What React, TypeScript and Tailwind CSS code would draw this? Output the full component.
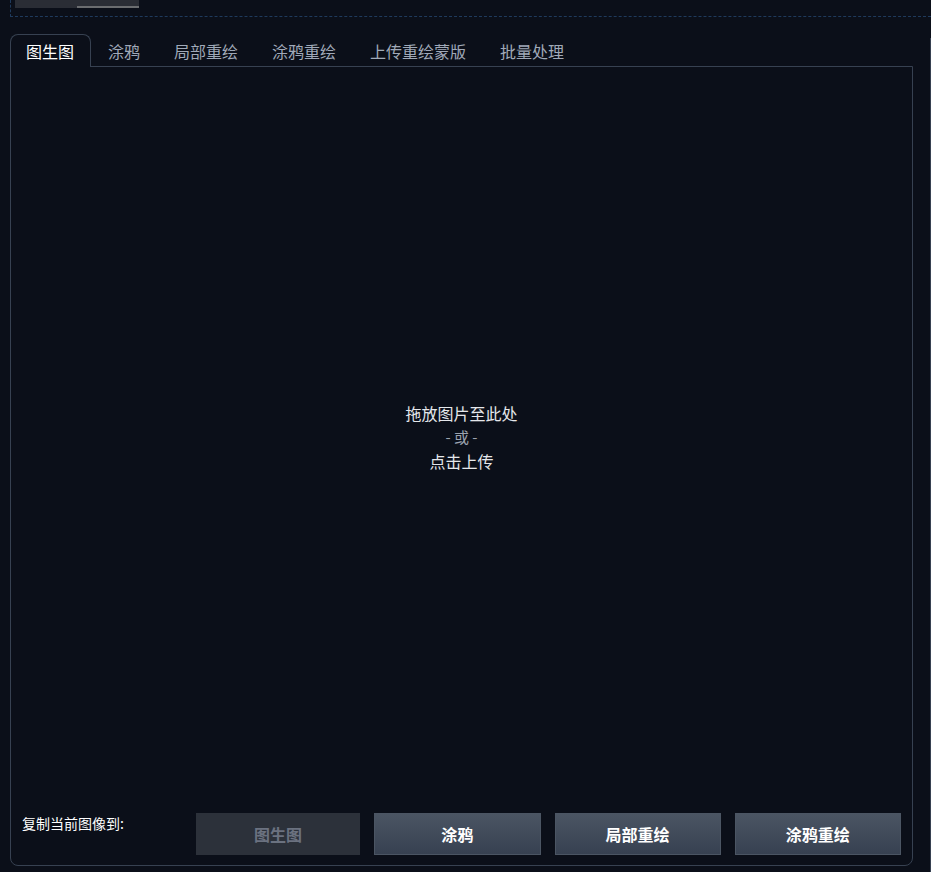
import React from "react";

const tabs = ["图生图", "涂鸦", "局部重绘", "涂鸦重绘", "上传重绘蒙版", "批量处理"];

export default function App() {
  return (
    <div
      className="w-[931px] h-[872px] overflow-hidden bg-[#0b0f19] text-white"
      style={{ fontFamily: '"Noto Sans CJK SC", "Noto Sans", sans-serif' }}
    >
      {/* top dashed block */}
      <div className="ml-[10px] h-[17px] border-l border-b border-dashed border-[#1f3a5c]">
        <div className="ml-[4px] w-[124px] h-[8px] bg-[#2a2d35] flex items-end">
          <div className="ml-[62px] w-[62px] h-[2px] bg-[#6b6d70]" />
        </div>
      </div>

      <div className="flex mt-[17px]">
        <div className="ml-[10px] w-[903px] flex flex-col">
          {/* tabs */}
          <div className="flex relative z-10 -mb-px">
            {tabs.map((t, i) => (
              <div
                key={t}
                className={
                  i === 0
                    ? "pl-[15px] pr-4 py-1 border border-b-0 border-[#374151] rounded-t-lg bg-[#0b0f19] text-white text-[16px] leading-[24px] h-[33px]"
                    : "px-4 py-1 border border-b-0 border-transparent text-[#a0a9b8] text-[16px] leading-[24px] h-[33px]"
                }
              >
                {t}
              </div>
            ))}
          </div>
          {/* panel */}
          <div className="h-[800px] border border-[#374151] rounded-b-lg flex flex-col">
            <div className="h-[740px] flex flex-col items-center justify-center text-[16px] leading-[24px]">
              <div className="text-[#e5e7eb]">拖放图片至此处</div>
              <div className="text-[#9ca3af] text-[15px]">- 或 -</div>
              <div className="text-[#e5e7eb]">点击上传</div>
            </div>
            <div className="mt-[6px] flex pl-[11px] pr-[11px]">
              <div className="w-[174px] text-[14px] leading-[20px] text-white">复制当前图像到:</div>
              <div className="flex-1 flex gap-[14px]">
                <div className="flex-1 h-[42px] bg-[#2c313a] flex items-center justify-center text-[16px] font-bold text-[#6b7280]">
                  图生图
                </div>
                {["涂鸦", "局部重绘", "涂鸦重绘"].map((b) => (
                  <div
                    key={b}
                    className="flex-1 h-[42px] border border-[#4b5563] bg-gradient-to-b from-[#4b5563] to-[#374151] flex items-center justify-center text-[16px] font-bold text-white"
                  >
                    {b}
                  </div>
                ))}
              </div>
            </div>
          </div>
        </div>
        <div className="ml-auto mt-[4px] w-px bg-[#374151] h-[900px]" />
      </div>
    </div>
  );
}
